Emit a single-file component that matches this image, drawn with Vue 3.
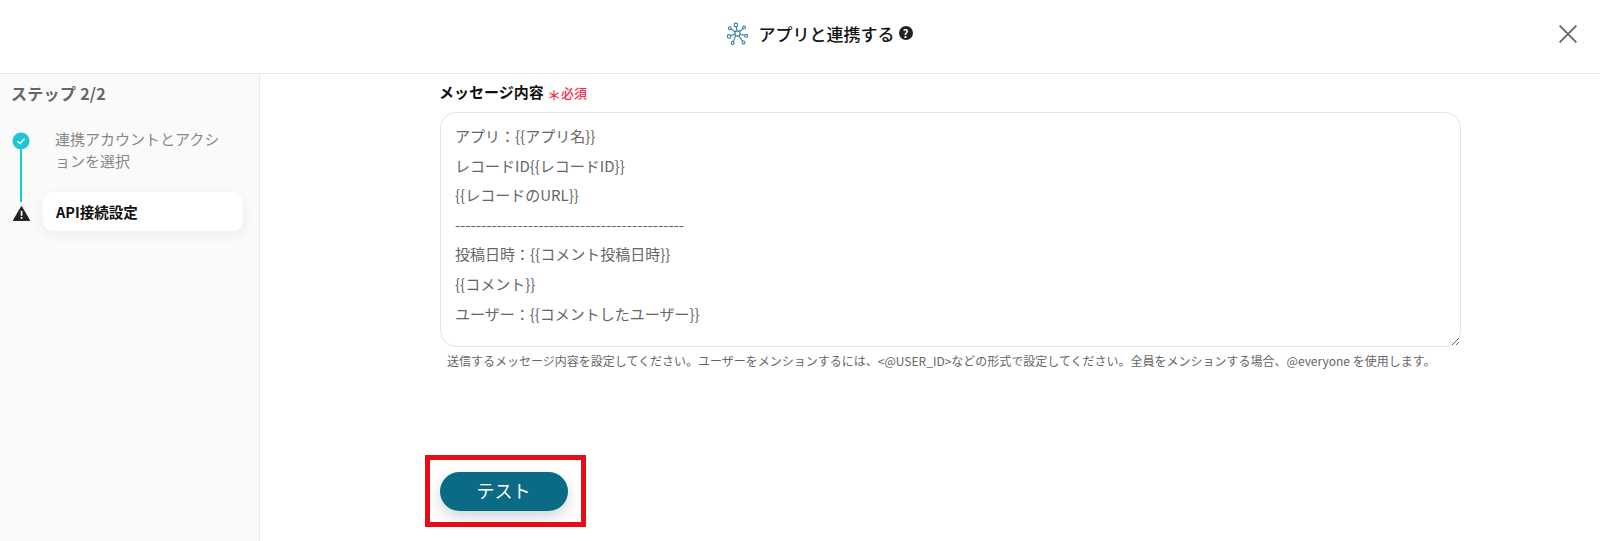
<template>
  <div class="page">
    <header class="top">
      <div class="title">
        <svg class="hub" width="23" height="23" viewBox="0 0 24 24" fill="none" stroke="#2f7f97" stroke-width="1.1">
          <rect x="9.500" y="9.500" width="5" height="5" rx="1" />
          <path d="M11.500 9.500 10.500 4M14.500 10 18 6.500M14.500 12.500 20 14M13.500 14.500 17.500 20.500M10 14.500 7.500 21M9.500 12.500 4.500 14.500M9.500 10.500 5 7" />
          <circle cx="10.300" cy="3" r="1.800" fill="#fff" />
          <circle cx="18.800" cy="5.800" r="1.500" fill="#fff" />
          <circle cx="21" cy="14.300" r="1.500" fill="#fff" />
          <circle cx="18.300" cy="21.300" r="1.500" fill="#fff" />
          <circle cx="7" cy="22" r="1.500" fill="#fff" />
          <circle cx="3.200" cy="15" r="1.800" fill="#fff" />
          <circle cx="4" cy="6.500" r="1.500" fill="#fff" />
        </svg>
        <span>アプリと連携する</span>
        <span class="help">?</span>
      </div>
      <button class="close" aria-label="閉じる">
        <svg width="18" height="18" viewBox="0 0 18 18" stroke="#666" stroke-width="1.800" fill="none">
          <path d="M0.600 0.600 17.400 17.400M17.400 0.600 0.600 17.400" />
        </svg>
      </button>
    </header>

    <div class="body">
      <aside class="side">
        <div class="step-head">ステップ 2/2</div>
        <ul class="steps">
          <li v-for="s in steps" :key="s.name" class="step" :class="s.state">
            <span class="marker">
              <svg v-if="s.state === 'done'" width="18" height="18" viewBox="0 0 18 18">
                <circle cx="9" cy="9" r="8.500" fill="#1fc5d6" />
                <path d="M5.500 9.200 8 11.500 12.500 6.800" stroke="#fff" stroke-width="1.400" fill="none" />
              </svg>
              <svg v-else width="17" height="15" viewBox="0 0 17 15">
                <path d="M8.500 0.500 16.800 14.700H0.200Z" fill="#222" stroke="#222" stroke-linejoin="round" />
                <rect x="7.700" y="4.800" width="1.700" height="5" fill="#fff" />
                <rect x="7.700" y="11" width="1.700" height="1.800" fill="#fff" />
              </svg>
            </span>
            <span class="step-name">{{ s.name }}</span>
          </li>
        </ul>
      </aside>

      <main class="main">
        <label class="label">
          メッセージ内容
          <span class="req"><span class="star">＊</span>必須</span>
        </label>
        <textarea class="message" :value="message" spellcheck="false"></textarea>
        <p class="hint">送信するメッセージ内容を設定してください。ユーザーをメンションするには、&lt;@USER_ID&gt;などの形式で設定してください。全員をメンションする場合、@everyone を使用します。</p>
        <div class="mark">
          <button class="test">テスト</button>
        </div>
      </main>
    </div>
  </div>
</template>

<script setup>
const steps = [
  { name: '連携アカウントとアクションを選択', state: 'done' },
  { name: 'API接続設定', state: 'current' }
]

const message = `アプリ：{{アプリ名}}
レコードID{{レコードID}}
{{レコードのURL}}
--------------------------------------------
投稿日時：{{コメント投稿日時}}
{{コメント}}
ユーザー：{{コメントしたユーザー}}`
</script>

<style>
html, body {
  margin: 0;
  background: #fff;
  overflow: hidden;
}
</style>

<style scoped>
.page {
  height: 541px;
  display: flex;
  flex-direction: column;
  font-family: "Noto Sans CJK JP", "Noto Sans", sans-serif;
  color: #111;
}

.top {
  height: 74px;
  flex: none;
  box-sizing: border-box;
  border-bottom: 1px solid #e8e8e8;
  display: flex;
  align-items: center;
  justify-content: center;
  position: relative;
}

.title {
  display: flex;
  align-items: center;
  gap: 10px;
  margin: 0 0 7px 38px;
  font-size: 17px;
  font-weight: 500;
}

.help {
  width: 14px;
  height: 14px;
  margin-left: -6px;
  border-radius: 50%;
  background: #222;
  color: #fff;
  font-size: 11px;
  font-weight: 700;
  line-height: 14px;
  text-align: center;
}

.close {
  position: absolute;
  right: 23px;
  top: 25px;
  padding: 0;
  border: 0;
  background: none;
  line-height: 0;
}

.body {
  flex: 1;
  display: flex;
  min-height: 0;
}

.side {
  width: 260px;
  flex: none;
  box-sizing: border-box;
  background: #fafafa;
  border-right: 1px solid #e8e8e8;
  padding: 8px 16px 0 12px;
}

.step-head {
  margin-left: -1px;
  font-size: 16px;
  font-weight: 700;
  line-height: 22px;
  letter-spacing: 0.3px;
  color: #666;
}

.steps {
  list-style: none;
  margin: 24px 0 0;
  padding: 0;
}

.step {
  display: flex;
  align-items: flex-start;
  position: relative;
}

.marker {
  width: 18px;
  flex: none;
  display: flex;
  justify-content: center;
  line-height: 0;
}

.step.done .marker {
  padding-top: 4px;
}

.step.done::after {
  content: "";
  position: absolute;
  left: 8px;
  top: 20px;
  bottom: -30px;
  width: 2px;
  background: #12ccd8;
}

.step.done .step-name {
  margin-left: 25px;
  padding-right: 16px;
  font-size: 15px;
  line-height: 22px;
  color: #888;
}

.step.current {
  margin-top: 20px;
  align-items: center;
}

.step.current .marker {
  position: relative;
  z-index: 1;
  background: #fafafa;
  padding-top: 3px;
}

.step.current .step-name {
  margin-left: 13px;
  flex: 1;
  height: 39px;
  box-sizing: border-box;
  padding-left: 13px;
  background: #fff;
  border-radius: 10px;
  box-shadow: 0 4px 14px rgba(0, 0, 0, 0.06);
  font-size: 14.500px;
  font-weight: 700;
  line-height: 39px;
}

.main {
  flex: 1;
  padding: 6px 0 0 179px;
}

.label {
  display: block;
  font-size: 15px;
  font-weight: 700;
  line-height: 24px;
  height: 32px;
}

.req {
  color: #f0304f;
  font-size: 13px;
  font-weight: 500;
}

.star {
  font-size: 14px;
  position: relative;
  top: 2px;
}

.message {
  display: block;
  width: 1021px;
  height: 235px;
  margin-left: 1px;
  box-sizing: border-box;
  padding: 8px 14px;
  border: 1px solid #dfe3ea;
  border-radius: 16px;
  outline: none;
  font-family: inherit;
  font-size: 15px;
  line-height: 29.600px;
  color: #666;
  overflow: hidden;
  resize: vertical;
}

.hint {
  margin: 5px 0 0 8px;
  font-size: 12px;
  line-height: 18px;
  color: #666;
}

.mark {
  width: 161px;
  height: 72px;
  box-sizing: border-box;
  margin: 85px 0 0 -14px;
  padding-right: 4px;
  border: 5px solid #e60d18;
  display: flex;
  align-items: center;
  justify-content: center;
}

.test {
  width: 128px;
  height: 39px;
  padding: 0 0 3px;
  border: 0;
  border-radius: 20px;
  background: #0b6a84;
  color: #fff;
  font-family: inherit;
  font-size: 18px;
  box-shadow: 0 6px 14px rgba(40, 60, 80, 0.22);
}
</style>
